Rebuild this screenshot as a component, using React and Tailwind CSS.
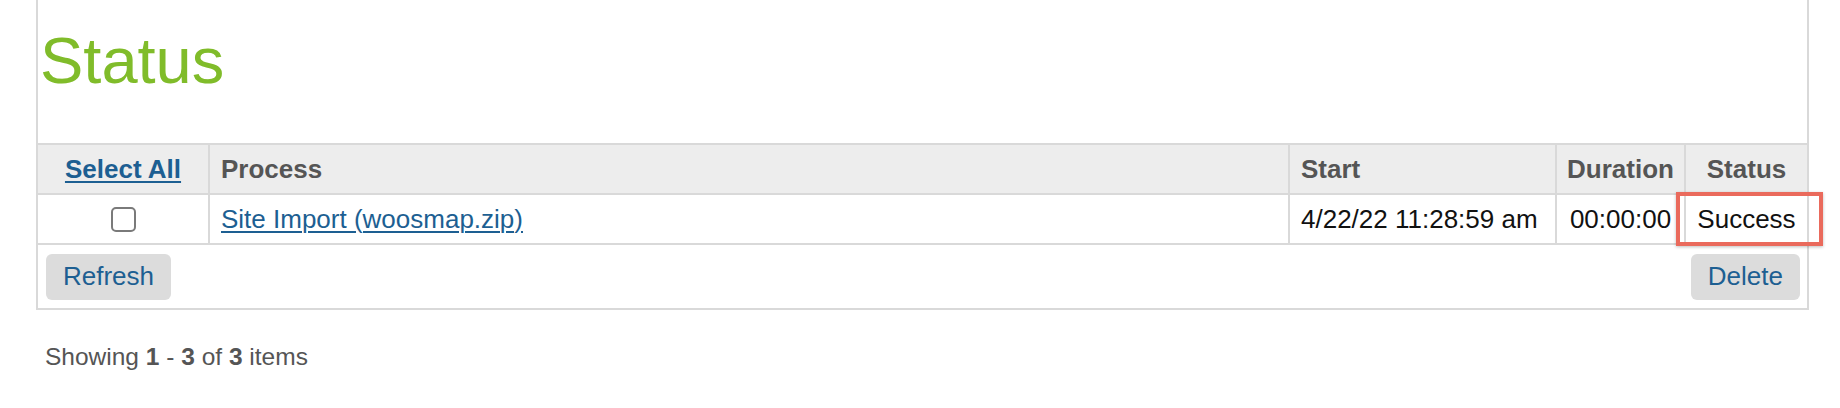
export default function App() {
  const link = "text-[#1d5f92] underline decoration-[2px] underline-offset-[3px]";
  return (
    <div className="min-h-[408px] w-[1840px] bg-white font-['Liberation_Sans',Arial,sans-serif]">
      <div className="ml-[36px] w-[1773px] border-2 border-t-0 border-[#d9d9d9]">
        <div className="h-[143px] pl-[2px] pt-[28px]">
          <h1 className="text-[65px] leading-none text-[#80bc2a]">Status</h1>
        </div>
        {/* header row */}
        <div className="grid h-[50px] grid-cols-[170px_1080px_267px_129px_1fr] border-t-2 border-[#d9d9d9] bg-[#ededed] text-[26px] font-bold text-[#555555]">
          <div className="flex items-center justify-center">
            <a href="#" className={link}>Select All</a>
          </div>
          <div className="flex items-center border-l-2 border-[#d9d9d9] px-[11px]">Process</div>
          <div className="flex items-center border-l-2 border-[#d9d9d9] px-[11px]">Start</div>
          <div className="flex items-center justify-center border-l-2 border-[#d9d9d9]">Duration</div>
          <div className="flex items-center justify-center border-l-2 border-[#d9d9d9]">Status</div>
        </div>
        {/* data row */}
        <div className="grid h-[50px] grid-cols-[170px_1080px_267px_129px_1fr] border-t-2 border-[#d9d9d9] text-[26px] text-[#111111]">
          <div className="flex items-center justify-center">
            <input
              type="checkbox"
              className="h-[25px] w-[25px] appearance-none rounded-[5px] border-2 border-[#7a7a7a] bg-white"
            />
          </div>
          <div className="flex items-center border-l-2 border-[#d9d9d9] px-[11px]">
            <a href="#" className="text-[#1d5f92] underline decoration-[1.5px] underline-offset-[3px]">Site Import (woosmap.zip)</a>
          </div>
          <div className="flex items-center whitespace-nowrap border-l-2 border-[#d9d9d9] px-[11px]">4/22/22 11:28:59 am</div>
          <div className="flex items-center justify-center border-l-2 border-[#d9d9d9]">00:00:00</div>
          <div className="relative flex items-center justify-center border-l-2 border-[#d9d9d9]">
            <span className="relative z-10">Success</span>
            <div className="absolute -left-[10px] -top-[3px] h-[54px] w-[147px] border-[4px] border-[#ea6a5c] shadow-[0_1px_3px_rgba(0,0,0,0.25)]" />
          </div>
        </div>
        {/* footer */}
        <div className="flex h-[65px] items-center justify-between border-t-2 border-[#d9d9d9] pl-[8px] pr-[7px]">
          <button className="h-[46px] rounded-[6px] bg-[#dcdcdc] px-[17px] text-[26px] text-[#1d5f92]">Refresh</button>
          <button className="h-[46px] rounded-[6px] bg-[#dcdcdc] px-[17px] text-[26px] text-[#1d5f92]">Delete</button>
        </div>
      </div>
      <p className="ml-[45px] mt-[33px] text-[24.5px] leading-[28px] text-[#555555]">
        Showing <b>1</b> - <b>3</b> of <b>3</b> items
      </p>
    </div>
  );
}
